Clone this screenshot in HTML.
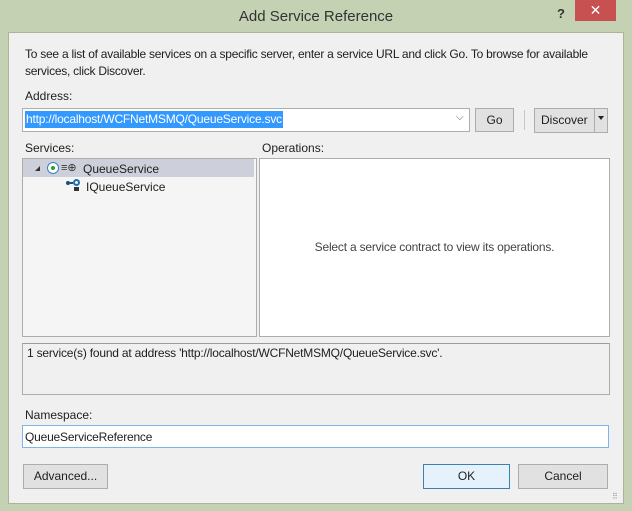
<!DOCTYPE html>
<html><head><style>
*{box-sizing:border-box;margin:0;padding:0}
body{width:632px;height:511px;background:#c4d1b2;font-family:"Liberation Sans",sans-serif;font-size:12px;color:#1e1e1e;position:relative;overflow:hidden}
.a{position:absolute}
.client{left:8px;top:32px;width:616px;height:472px;background:#f0f0f0;border:1px solid #a8b596}
.btn{background:#e1e1e1;border:1px solid #adadad;text-align:center;line-height:23px}
.inp{background:#fff;border:1px solid #abadb3}
</style></head><body>
<div class="a" style="left:0;top:0;width:632px;height:32px;text-align:center;font-size:15px;line-height:34px;color:#333">Add Service Reference</div>
<div class="a" style="left:557px;top:6px;font-size:13px;font-weight:bold;color:#333">?</div>
<div class="a" style="left:575px;top:0;width:41px;height:21px;background:#c75050;color:#fff;text-align:center;font-size:14px;line-height:21px">✕</div>
<div class="a client"></div>
<div class="a" style="left:25px;top:46px;width:595px;line-height:17px;letter-spacing:-0.25px">To see a list of available services on a specific server, enter a service URL and click Go. To browse for available services, click Discover.</div>
<div class="a" style="left:25px;top:89px">Address:</div>
<div class="a inp" style="left:22px;top:108px;width:448px;height:24px"></div>
<div class="a" style="left:25px;top:111px;background:#3399ff;color:#fff;padding:1px 1px;line-height:15px;letter-spacing:-0.2px">http://localhost/WCFNetMSMQ/QueueService.svc</div>
<div class="a" style="left:456px;top:112px;color:#555;font-size:10px">⌵</div>
<div class="a btn" style="left:475px;top:108px;width:39px;height:24px">Go</div>
<div class="a" style="left:524px;top:110px;width:1px;height:20px;background:#c8c8c8"></div>
<div class="a btn" style="left:534px;top:108px;width:74px;height:25px;text-align:left;padding-left:6px">Discover</div>
<div class="a" style="left:594px;top:109px;width:1px;height:23px;background:#adadad"></div>
<div class="a" style="left:598px;top:116px;width:0;height:0;border-left:3px solid transparent;border-right:3px solid transparent;border-top:4px solid #222"></div>
<div class="a" style="left:25px;top:141px">Services:</div>
<div class="a" style="left:262px;top:141px">Operations:</div>
<div class="a" style="left:22px;top:158px;width:235px;height:179px;background:#f5f5f5;border:1px solid #adadad"></div>
<div class="a" style="left:23px;top:159px;width:231px;height:18px;background:#cdd0da"></div>
<div class="a" style="left:35px;top:166px;width:0;height:0;border-left:5px solid transparent;border-bottom:5px solid #333"></div>
<div class="a" style="left:47px;top:162px;width:12px;height:12px;border-radius:50%;border:1px solid #3b7fc4;background:#fff"></div>
<div class="a" style="left:51px;top:166px;width:4px;height:4px;border-radius:50%;background:#2aa02a"></div>
<div class="a" style="left:61px;top:161px;font-size:11px;color:#333">≡⊕</div>
<div class="a" style="left:83px;top:162px">QueueService</div>
<div class="a" style="left:66px;top:181px;width:4px;height:4px;border-radius:50%;background:#1e4f7a"></div>
<div class="a" style="left:70px;top:182px;width:3px;height:2px;background:#1e4f7a"></div>
<div class="a" style="left:73px;top:179px;width:7px;height:7px;border-radius:50%;border:2px solid #1e6fb4"></div>
<div class="a" style="left:74px;top:187px;width:5px;height:4px;background:#333"></div>
<div class="a" style="left:86px;top:180px">IQueueService</div>
<div class="a" style="left:259px;top:158px;width:351px;height:179px;background:#fff;border:1px solid #adadad;text-align:center;line-height:177px;color:#444;letter-spacing:-0.2px">Select a service contract to view its operations.</div>
<div class="a" style="left:22px;top:343px;width:588px;height:52px;background:#f0f0f0;border:1px solid #adadad;border-top-color:#9c9c9c"></div>
<div class="a" style="left:27px;top:346px;letter-spacing:-0.2px">1 service(s) found at address 'http://localhost/WCFNetMSMQ/QueueService.svc'.</div>
<div class="a" style="left:25px;top:408px">Namespace:</div>
<div class="a inp" style="left:22px;top:425px;width:587px;height:23px;border-color:#7eb4ea;padding:4px 2px;letter-spacing:-0.2px">QueueServiceReference</div>
<div class="a btn" style="left:23px;top:464px;width:85px;height:25px">Advanced...</div>
<div class="a btn" style="left:423px;top:464px;width:87px;height:25px;border-color:#3c7fb1;background:#e5f1fb">OK</div>
<div class="a btn" style="left:518px;top:464px;width:90px;height:25px">Cancel</div>
<div class="a" style="left:612px;top:492px;font-size:8px;color:#999">⠿</div>
</body></html>
